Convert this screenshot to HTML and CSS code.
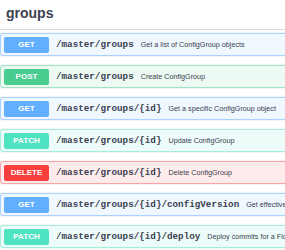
FILE: index.html
```html
<!DOCTYPE html>
<html lang="en">
    <head>
        <meta charset="UTF-8">
        <meta name="viewport" content="width=device-width, initial-scale=1.0">
        <link rel="stylesheet" href="styles.css">
        <title>groups</title>
    </head>
    <body>
        <h3 class="tag-title">groups</h3>

        <div class="ops">
            <div class="op op-get">
                <span class="method">GET</span>
                <span class="path">/master/groups</span>
                <span class="summary">Get a list of ConfigGroup objects</span>
            </div>
            <div class="op op-post">
                <span class="method">POST</span>
                <span class="path">/master/groups</span>
                <span class="summary">Create ConfigGroup</span>
            </div>
            <div class="op op-get">
                <span class="method">GET</span>
                <span class="path">/master/groups/{id}</span>
                <span class="summary">Get a specific ConfigGroup object</span>
            </div>
            <div class="op op-patch">
                <span class="method">PATCH</span>
                <span class="path">/master/groups/{id}</span>
                <span class="summary">Update ConfigGroup</span>
            </div>
            <div class="op op-delete">
                <span class="method">DELETE</span>
                <span class="path">/master/groups/{id}</span>
                <span class="summary">Delete ConfigGroup</span>
            </div>
            <div class="op op-get">
                <span class="method">GET</span>
                <span class="path">/master/groups/{id}/configVersion</span>
                <span class="summary">Get effective config version</span>
            </div>
            <div class="op op-patch">
                <span class="method">PATCH</span>
                <span class="path">/master/groups/{id}/deploy</span>
                <span class="summary">Deploy commits for a FlowGroup</span>
            </div>
        </div>
    </body>
</html>
```

FILE: styles.css
```css
body {
    font-family: "Liberation Sans", Arial, sans-serif;
    color: #3b4151;
    background: #fff;
    margin: 0;
    overflow: hidden;
}

.tag-title {
    margin: 0;
    padding: 5px 0 7px 6px;
    font-size: 14px;
    line-height: 17px;
    font-weight: bold;
    border-bottom: 1px solid rgba(59, 65, 81, 0.2);
}

.ops {
    width: 340px;
    padding-top: 3px;
}

.op {
    display: flex;
    align-items: center;
    height: 23px;
    box-sizing: border-box;
    margin-bottom: 9px;
    border: 1px solid;
    border-radius: 3px;
    box-shadow: 0 0 2px rgba(0, 0, 0, 0.15);
    white-space: nowrap;
}

.method {
    width: 45px;
    height: 16px;
    margin-left: 3px;
    border-radius: 2px;
    color: #fff;
    font-size: 8px;
    font-weight: bold;
    line-height: 16px;
    text-align: center;
    flex-shrink: 0;
}

.path {
    margin-left: 7px;
    font-family: "Liberation Mono", "Courier New", monospace;
    font-size: 9.25px;
    font-weight: bold;
}

.summary {
    margin-left: 7px;
    font-size: 7.2px;
}

.op-get {
    background: #eff7ff;
    border-color: #a8d1fb;
}
.op-get .method {
    background: #61affe;
}

.op-post {
    background: #edfaf4;
    border-color: #a0e2c4;
}
.op-post .method {
    background: #49cc90;
}

.op-patch {
    background: #eefcf9;
    border-color: #a3eedd;
}
.op-patch .method {
    background: #50e3c2;
}

.op-delete {
    background: #feecec;
    border-color: #f9a5a5;
}
.op-delete .method {
    background: #f93e3e;
}
```
